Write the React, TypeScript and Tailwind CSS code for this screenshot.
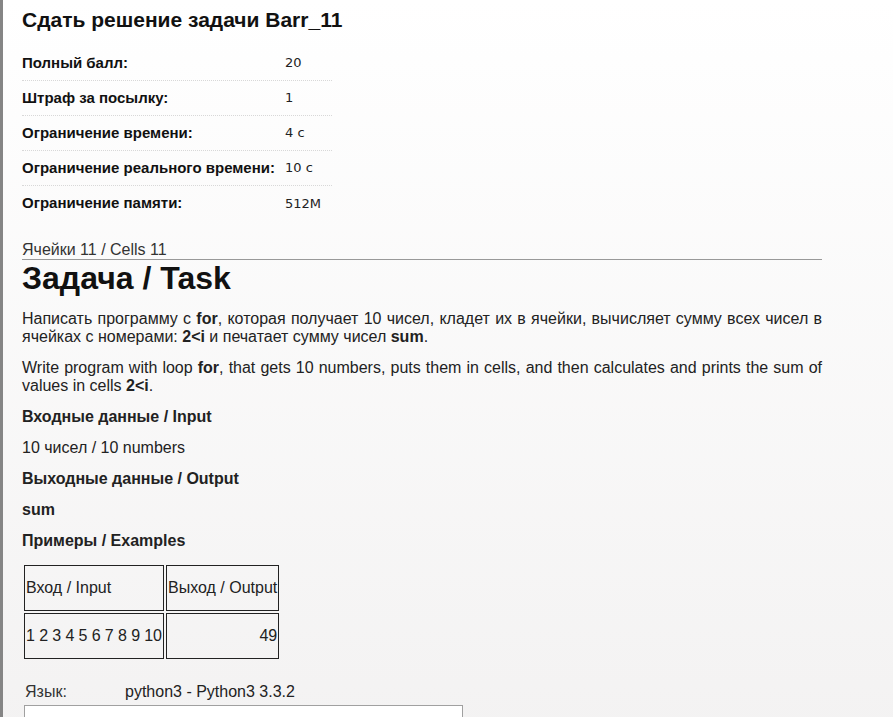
import React from "react";

const rows: [string, string][] = [
  ["Полный балл:", "20"],
  ["Штраф за посылку:", "1"],
  ["Ограничение времени:", "4 с"],
  ["Ограничение реального времени:", "10 с"],
  ["Ограничение памяти:", "512M"],
];

export default function App() {
  return (
    <div
      className="min-h-[717px] w-full border-l-[3px] border-[#858585] bg-gradient-to-b from-white to-[#f3f2f2] text-[#222]"
      style={{ fontFamily: '"Liberation Sans", Arial, sans-serif' }}
    >
      <div className="w-[819px] pl-[19px] pt-[8px]">
        <h2 className="text-[21px] leading-[24px] font-bold text-[#111]">
          Сдать решение задачи Barr_11
        </h2>

        <div className="mt-[14px] w-[310px]">
          {rows.map(([k, v], i) => (
            <div
              key={k}
              className={
                i < rows.length - 1
                  ? "flex h-[35px] items-center border-b border-dotted border-[#d8d8d8]"
                  : "flex h-[35px] items-center"
              }
            >
              <div className="w-[263px] text-[15px] font-bold text-[#111]">{k}</div>
              <div
                className="text-[13px] text-[#222]"
                style={{ fontFamily: '"DejaVu Sans", Verdana, sans-serif' }}
              >
                {v}
              </div>
            </div>
          ))}
        </div>

        <div className="mt-[20px] border-b border-[#999] text-[16px] leading-[18px] text-[#333]">
          Ячейки 11 / Cells 11
        </div>

        <h1 className="text-[32px] leading-[36px] font-bold text-[#111]">Задача / Task</h1>

        <div className="text-[16px] leading-[18px]">
          <p className="mt-[14px] text-justify">
            Написать программу с <b>for</b>, которая получает 10 чисел, кладет их в ячейки,
            вычисляет сумму всех чисел в ячейках с номерами: <b>2&lt;i</b> и печатает сумму
            чисел <b>sum</b>.
          </p>
          <p className="mt-[13px] text-justify">
            Write program with loop <b>for</b>, that gets 10 numbers, puts them in cells, and then
            calculates and prints the sum of values in cells <b>2&lt;i</b>.
          </p>
          <h3 className="mt-[13px] font-bold">Входные данные / Input</h3>
          <p className="mt-[13px]">10 чисел / 10 numbers</p>
          <h3 className="mt-[13px] font-bold">Выходные данные / Output</h3>
          <p className="mt-[13px] font-bold">sum</p>
          <h3 className="mt-[13px] font-bold">Примеры / Examples</h3>

          <table className="mt-[13px] table-fixed border-separate border-spacing-[2px]">
            <tbody>
              <tr>
                <td className="h-[46px] w-[140px] border border-[#222] px-[1px] align-middle whitespace-nowrap">
                  Вход / Input
                </td>
                <td className="h-[46px] w-[112px] border border-[#222] px-[1px] align-middle whitespace-nowrap">
                  Выход / Output
                </td>
              </tr>
              <tr>
                <td className="h-[46px] w-[140px] border border-[#222] px-[1px] align-middle whitespace-nowrap tracking-[-0.1px]">
                  1 2 3 4 5 6 7 8 9 10
                </td>
                <td className="h-[46px] w-[112px] border border-[#222] px-[1px] text-right align-middle">
                  49
                </td>
              </tr>
            </tbody>
          </table>

          <div className="mt-[22px] ml-[3px] flex text-[#222]">
            <div className="w-[100px] text-[#333]">Язык:</div>
            <div>python3 - Python3 3.3.2</div>
          </div>
          <div className="mt-[4px] ml-[2px] h-[40px] w-[439px] border border-[#a0a0a0] bg-white" />
        </div>
      </div>
    </div>
  );
}
